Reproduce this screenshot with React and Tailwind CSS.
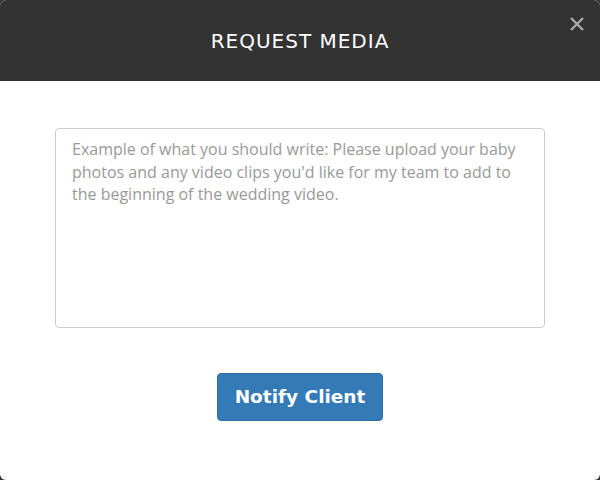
import React from 'react';

const App = () => {
    return (
        <div className="w-[600px] h-[480px] bg-[#333]">
            <div className="w-full h-full bg-white rounded-[6px] overflow-hidden flex flex-col">
                {/* Header */}
                <div className="relative h-[81px] bg-[#333] flex items-center justify-center shrink-0">
                    <h2 className="text-white text-[20px] font-normal tracking-[1px]" style={{ fontFamily: '"DejaVu Sans", sans-serif' }}>
                        REQUEST MEDIA
                    </h2>
                    <button className="absolute right-[13px] top-[14px] w-[20px] h-[20px] flex items-center justify-center">
                        <svg width="16" height="16" viewBox="0 0 16 16">
                            <path d="M2 2 L14 14 M14 2 L2 14" stroke="#aaa" strokeWidth="2.4" strokeLinecap="butt" />
                        </svg>
                    </button>
                </div>

                {/* Body */}
                <div className="flex flex-col items-center pt-[47px]">
                    <textarea
                        className="w-[490px] h-[200px] border border-[#ccc] rounded-[4px] px-[16px] py-[9px] text-[16px] leading-[22.5px] text-[#555] placeholder:text-[#999] resize-none outline-none"
                        style={{ fontFamily: '"Open Sans", sans-serif' }}
                        placeholder="Example of what you should write: Please upload your baby photos and any video clips you'd like for my team to add to the beginning of the wedding video."
                    />
                    <button
                        className="mt-[45px] w-[166px] h-[48px] bg-[#337ab7] border border-[#2e6da4] rounded-[4px] text-white text-[18.5px] font-bold"
                        style={{ fontFamily: '"DejaVu Sans", sans-serif' }}
                    >
                        Notify Client
                    </button>
                </div>
            </div>
        </div>
    );
};

export default App;
